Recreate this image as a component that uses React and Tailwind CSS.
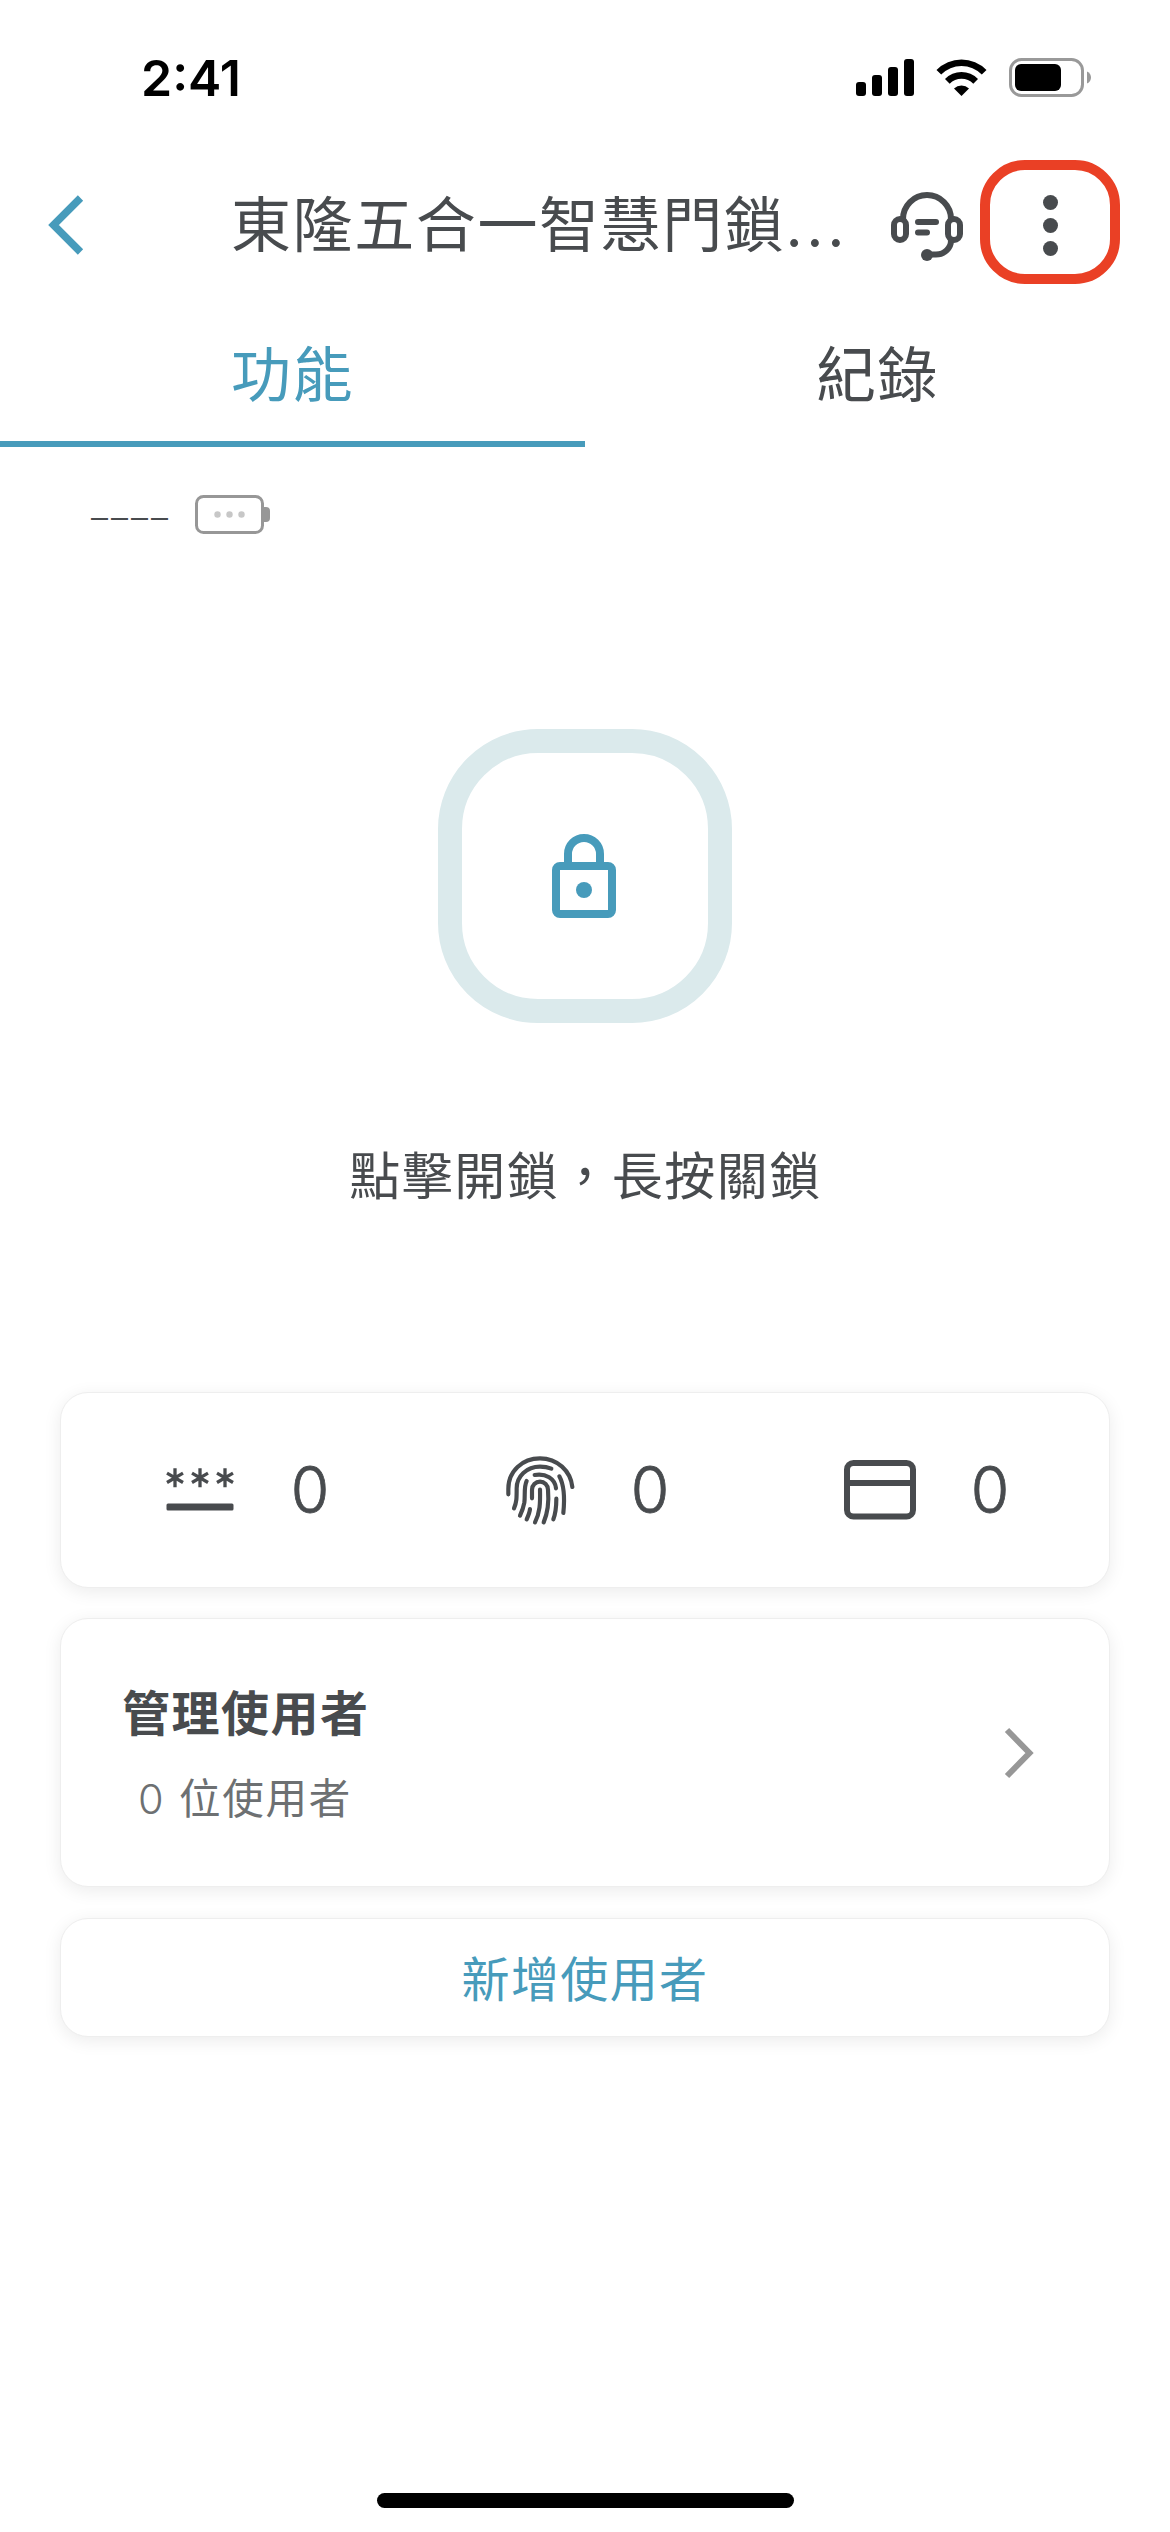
const CJK = "font-['Inter','Noto_Sans_CJK_TC',sans-serif]";

function StatusBar() {
  return (
    <div className="flex h-[154px] items-start justify-between pt-[58px] pr-[78px] pl-[141px] text-black">
      <span className="text-[50px] leading-[40px] font-semibold tracking-[0px]">2:41</span>
      <div className="flex h-[39px] items-center">
        <svg width="58" height="37" viewBox="0 0 58 37" fill="currentColor">
          <rect x="0" y="23" width="10" height="14" rx="3" />
          <rect x="16" y="16" width="10" height="21" rx="3" />
          <rect x="32" y="8" width="10" height="29" rx="3" />
          <rect x="48" y="0" width="10" height="37" rx="3" />
        </svg>
        <svg className="ml-[22px]" width="51" height="39" viewBox="0 0 51 39" fill="currentColor">
          <path d="M.5 12A35 35 0 0 1 50.5 12L45.8 16.5A28.5 28.5 0 0 0 5.2 16.5Z" />
          <path d="M9 21A23 23 0 0 1 42 21L37.3 25.7A16.5 16.5 0 0 0 13.7 25.7Z" />
          <path d="M18 30.5A11 11 0 0 1 33 30.5L25.5 38Z" />
        </svg>
        <svg className="ml-[22px]" width="83" height="39" viewBox="0 0 83 39">
          <rect x="1.5" y="1.5" width="72" height="36" rx="11" fill="none" stroke="#999" strokeWidth="3" />
          <rect x="6" y="6" width="46" height="27" rx="6" fill="#000" />
          <path d="M78 13.5C80.8 14.6 82 17 82 19.5S80.8 24.4 78 25.5Z" fill="#999" />
        </svg>
      </div>
    </div>
  );
}

function Headset() {
  return (
    <svg width="72" height="70" viewBox="0 0 72 70" fill="none" stroke="currentColor" strokeWidth="6" strokeLinecap="round">
      <path d="M12 27a24 24 0 0 1 48 0" strokeLinecap="butt" />
      <rect x="3" y="27" width="12" height="21" rx="6" />
      <rect x="57" y="27" width="12" height="21" rx="6" />
      <path d="M36 62.5h9c9 0 15-7 15-14" />
      <circle cx="36" cy="63" r="6" fill="currentColor" stroke="none" />
      <path d="M27 30h18M27 40.5h9" />
    </svg>
  );
}

function Header() {
  return (
    <header className="flex h-[143px] items-start">
      <svg className="mt-[39px] ml-[46px] text-[#479bbb]" width="40" height="64" viewBox="0 0 40 64" fill="none" stroke="currentColor" strokeWidth="7.5">
        <path d="M34.5 5L7.5 32l27 27" />
      </svg>
      <h1 className="mt-[31px] ml-[145px] w-[624px] text-[60px] leading-[80px] tracking-[1.6px] whitespace-nowrap">
        東隆五合一智慧門鎖<span className="tracking-[3.6px]">...</span>
      </h1>
      <button className="mt-[38px] ml-[36px]"><Headset /></button>
      <button className="mt-[6px] ml-[17px] flex h-[124px] w-[140px] flex-col items-center justify-center gap-[8px] rounded-[45px] border-[10px] border-[#ea4025] pt-[6px]">
        <i className="size-[15px] rounded-full bg-current" />
        <i className="size-[15px] rounded-full bg-current" />
        <i className="size-[15px] rounded-full bg-current" />
      </button>
    </header>
  );
}

function Tabs() {
  return (
    <nav className="grid h-[150px] grid-cols-2 text-[60px] leading-[80px] tracking-[1.6px]">
      <button className="flex justify-center border-b-[6px] border-[#479bbb] pt-[38px] text-[#479bbb]">功能</button>
      <button className="flex justify-center pt-[38px]">紀錄</button>
    </nav>
  );
}

function BatteryUnknown() {
  return (
    <svg width="76" height="40" viewBox="0 0 76 40">
      <rect x="1.5" y="1.5" width="66" height="36" rx="7" fill="none" stroke="#979797" strokeWidth="3" />
      <path d="M68 12h3a4 4 0 0 1 4 4v7a4 4 0 0 1-4 4h-3z" fill="#979797" />
      <g fill="#c7c7c7">
        <circle cx="22.5" cy="19.5" r="3.2" />
        <circle cx="34.5" cy="19.5" r="3.2" />
        <circle cx="46.5" cy="19.5" r="3.2" />
      </g>
    </svg>
  );
}

function PasscodeIcon() {
  return (
    <svg width="72" height="72" viewBox="0 0 72 72" fill="none" stroke="currentColor">
      <g strokeWidth="3.3">
        <path d="M11 14.3v19M3 19.1l16 9.4M19 19.1L3 28.5" />
        <path d="M36 14.3v19M28 19.1l16 9.4M44 19.1L28 28.5" />
        <path d="M61 14.3v19M53 19.1l16 9.4M69 19.1L53 28.5" />
      </g>
      <rect x="2.5" y="49.5" width="67" height="7" rx="1.5" fill="currentColor" stroke="none" />
    </svg>
  );
}

function FingerprintIcon() {
  return (
    <svg width="90" height="90" viewBox="0 0 270 270" fill="none" stroke="currentColor" strokeWidth="12.5" strokeLinecap="round">
      <path d="M40 148v-16C40 78 82 40 135 40c52 0 92 38 97 86" />
      <path d="M57 190c8-18 8-30 8-60 0-36 30-65 70-65 13 0 24 2 34 6" />
      <path d="M95 108c-9 17-4 45-7 65-3 16-7 26-13 39" />
      <path d="M119 90c33-6 61 11 64 40" />
      <path d="M193 94c12 22 17 62 12 110" />
      <path d="M111 160v-26a24 24 0 0 1 48 0c3 35-1 70-13 98" />
      <path d="M135 134c1 42 0 68-15 98" />
      <path d="M105 192c-1 11-5 20-10 31" />
      <path d="M184 161c0 25-2 43-9 62" />
    </svg>
  );
}

function CardIcon() {
  return (
    <svg width="72" height="72" viewBox="0 0 72 72" fill="none" stroke="currentColor" strokeWidth="6">
      <rect x="3" y="9" width="66" height="53.5" rx="6.5" />
      <path d="M0 29h72" />
    </svg>
  );
}

const CARD = "rounded-[28px] border border-[#eeeeee] bg-white shadow-[0_4px_18px_rgba(0,0,0,0.08)]";

const CREDENTIALS = [
  { id: "passcode", Icon: PasscodeIcon, count: 0 },
  { id: "fingerprint", Icon: FingerprintIcon, count: 0 },
  { id: "card", Icon: CardIcon, count: 0 },
];

export default function App() {
  return (
    <div className={`${CJK} flex h-[2532px] w-[1170px] flex-col overflow-hidden bg-white text-[#484b4e]`} lang="zh-TW">
      <StatusBar />
      <Header />
      <Tabs />
      <main className="flex flex-col px-[60px]">
        <div className="flex h-[282px] items-start pt-[48px] pl-[31px]">
          <span className="mt-[3px] h-[40px] w-[104px] text-[34px] leading-[40px] font-light tracking-[3px] whitespace-nowrap">––––</span>
          <BatteryUnknown />
        </div>
        <button className="flex size-[294px] items-center justify-center self-center rounded-[100px] border-[24px] border-[#dbeaec] text-[#479bbb]">
          <svg width="66" height="88" viewBox="0 0 66 88" fill="none" stroke="currentColor" strokeWidth="8">
            <rect x="4" y="34" width="56" height="48" rx="4" />
            <path d="M16 34V22a16 16 0 0 1 32 0v12" />
            <circle cx="32" cy="58" r="8" fill="currentColor" stroke="none" />
          </svg>
        </button>
        <p className="mt-[118px] pl-[1px] text-center text-[51px] leading-[72px] tracking-[1.5px]">點擊開鎖，長按關鎖</p>

        <section className={`${CARD} mt-[179px] flex h-[196px] items-center pl-[94px]`}>
          {CREDENTIALS.map(({ id, Icon, count }) => (
            <div key={id} className="flex w-[340px] shrink-0 items-center">
              <span className="flex w-[90px] justify-center"><Icon /></span>
              <span className="ml-[44px] flex w-[42px] justify-center text-[65px] leading-[72px] font-light [-webkit-text-stroke:0.8px_#484b4e]">
                <span className="scale-x-[0.96]">{count}</span>
              </span>
            </div>
          ))}
        </section>

        <section className={`${CARD} mt-[30px] flex h-[269px] items-center justify-between pr-[74px] pl-[61px]`}>
          <div className="pt-[3px]">
            <h2 className="text-[48px] leading-[66px] font-semibold tracking-[1.5px]">管理使用者</h2>
            <p className="mt-[23px] pl-[16px] text-[41.5px] leading-[58px] tracking-[1.8px] text-[#6d7072]">
              <span className="font-light">0</span> 位使用者
            </p>
          </div>
          <svg width="32" height="52" viewBox="0 0 32 52" fill="none" stroke="#979797" strokeWidth="6">
            <path d="M4 3l22.5 23L4 49" />
          </svg>
        </section>

        <button className={`${CARD} mt-[31px] flex h-[119px] items-center justify-center pt-[4px] text-[48px] tracking-[1.4px] text-[#479bbb]`}>
          新增使用者
        </button>
      </main>
      <div className="mt-auto mb-[24px] h-[15px] w-[417px] self-center rounded-full bg-black" />
    </div>
  );
}
